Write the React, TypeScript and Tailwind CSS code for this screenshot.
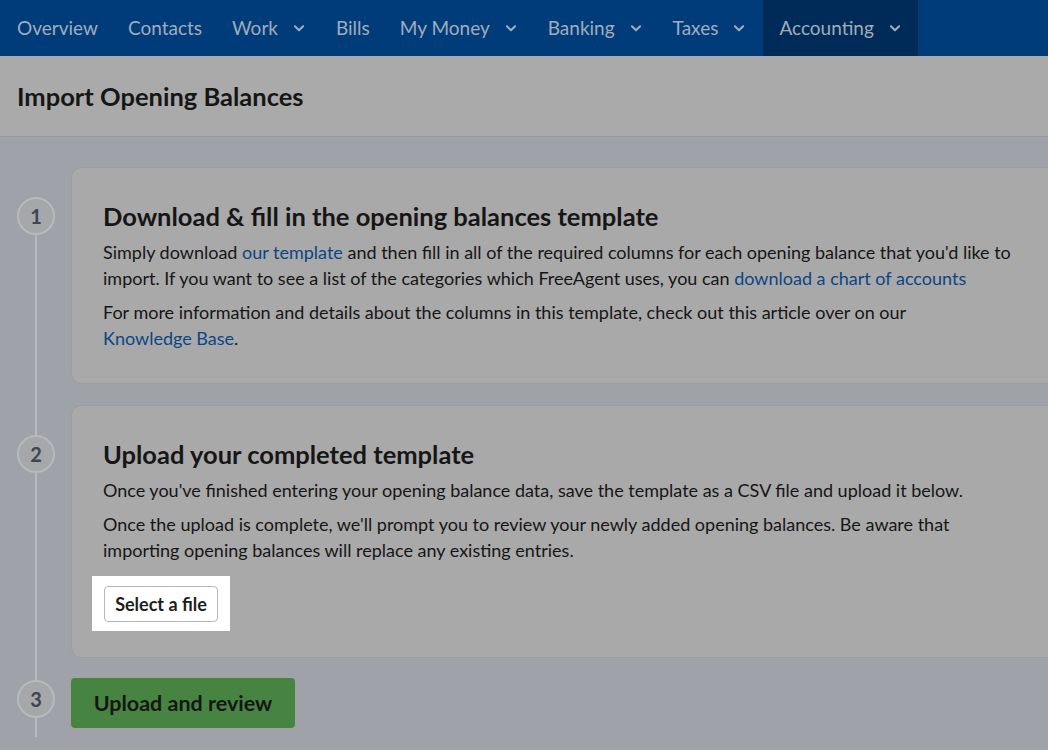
const navItems = [
  { label: 'Overview', menu: false },
  { label: 'Contacts', menu: false },
  { label: 'Work', menu: true },
  { label: 'Bills', menu: false },
  { label: 'My Money', menu: true },
  { label: 'Banking', menu: true },
  { label: 'Taxes', menu: true },
  { label: 'Accounting', menu: true, active: true },
];

const Chevron = () => (
  <svg className="w-3.5 h-3.5 ml-[14px]" fill="none" stroke="currentColor" viewBox="0 0 24 24">
    <path strokeLinecap="round" strokeLinejoin="round" strokeWidth={3.5} d="M5 9l7 7 7-7" />
  </svg>
);

const StepCircle = ({ n }: { n: number }) => (
  <div className="w-[38px] h-[38px] rounded-full border-2 border-[#b8b9bb] bg-[#a5a7aa] flex items-center justify-center text-[20px] font-bold text-[#3d4650] shrink-0">
    {n}
  </div>
);

const Link = ({ children }: { children: React.ReactNode }) => <span className="text-[#0b4683]">{children}</span>;

export default function App() {
  return (
    <div className="w-[1048px] h-[750px] overflow-hidden bg-[#9fa3a9] text-[#161616]" style={{ fontFamily: 'Lato, "Open Sans", sans-serif' }}>
      <nav className="h-[56px] bg-[#003c79] flex items-stretch text-[19px] text-[#a0acbb] pl-[2px]">
        {navItems.map((item) => (
          <div
            key={item.label}
            className={`flex items-center px-[15px] ${item.active ? 'bg-[#002b58] px-[16px] ml-[2px]' : ''}`}
          >
            {item.label}
            {item.menu && <Chevron />}
          </div>
        ))}
      </nav>
      <div className="h-[81px] bg-[#aaaaaa] border-b border-[#999a9c] flex items-center px-[17px]">
        <h1 className="text-[25.5px] font-bold text-[#161616]">Import Opening Balances</h1>
      </div>
      <div className="relative pt-[30px] pl-[17px]">
        <div className="absolute left-[35px] top-[80px] h-[520px] w-[2px] bg-[#b8b9bb]" />
        <div className="flex gap-[16px]">
          <div className="pt-[30px] relative"><StepCircle n={1} /></div>
          <div className="flex-1 bg-[#a9a9a9] border border-[#9c9d9f] rounded-l-[10px] border-r-0 h-[217px] pl-[31px] pr-[6px] pt-[31px] text-[18px] leading-[26px]">
            <h2 className="text-[25.5px] font-bold mb-[6px] leading-[34px]">Download &amp; fill in the opening balances template</h2>
            <p>Simply download <Link>our template</Link> and then fill in all of the required columns for each opening balance that you'd like to import. If you want to see a list of the categories which FreeAgent uses, you can <Link>download a chart of accounts</Link></p>
            <p className="mt-[8px] pr-[60px]">For more information and details about the columns in this template, check out this article over on our <Link>Knowledge Base</Link>.</p>
          </div>
        </div>
        <div className="flex gap-[16px] mt-[21px]">
          <div className="pt-[30px] relative"><StepCircle n={2} /></div>
          <div className="flex-1 bg-[#a9a9a9] border border-[#9c9d9f] rounded-l-[10px] border-r-0 h-[253px] pl-[31px] pt-[31px] text-[18px] leading-[26px]">
            <h2 className="text-[25.5px] font-bold mb-[6px] leading-[34px]">Upload your completed template</h2>
            <p>Once you've finished entering your opening balance data, save the template as a CSV file and upload it below.</p>
            <p className="mt-[8px] pr-[40px]">Once the upload is complete, we'll prompt you to review your newly added opening balances. Be aware that importing opening balances will replace any existing entries.</p>
            <div className="mt-[13px] -ml-[11px] w-[138px] h-[55px] bg-white flex items-center justify-center">
              <button className="h-[36px] px-[10px] border border-[#b4b9be] rounded-[4px] bg-white text-[18px] font-bold text-[#1d1d1d]">Select a file</button>
            </div>
          </div>
        </div>
        <div className="flex gap-[16px] mt-[20px] items-center">
          <div className="-mt-[8px] relative"><StepCircle n={3} /></div>
          <button className="w-[224px] h-[50px] rounded-[4px] bg-[#478442] text-[21.5px] font-bold text-[#161616]">Upload and review</button>
        </div>
      </div>
    </div>
  );
}
